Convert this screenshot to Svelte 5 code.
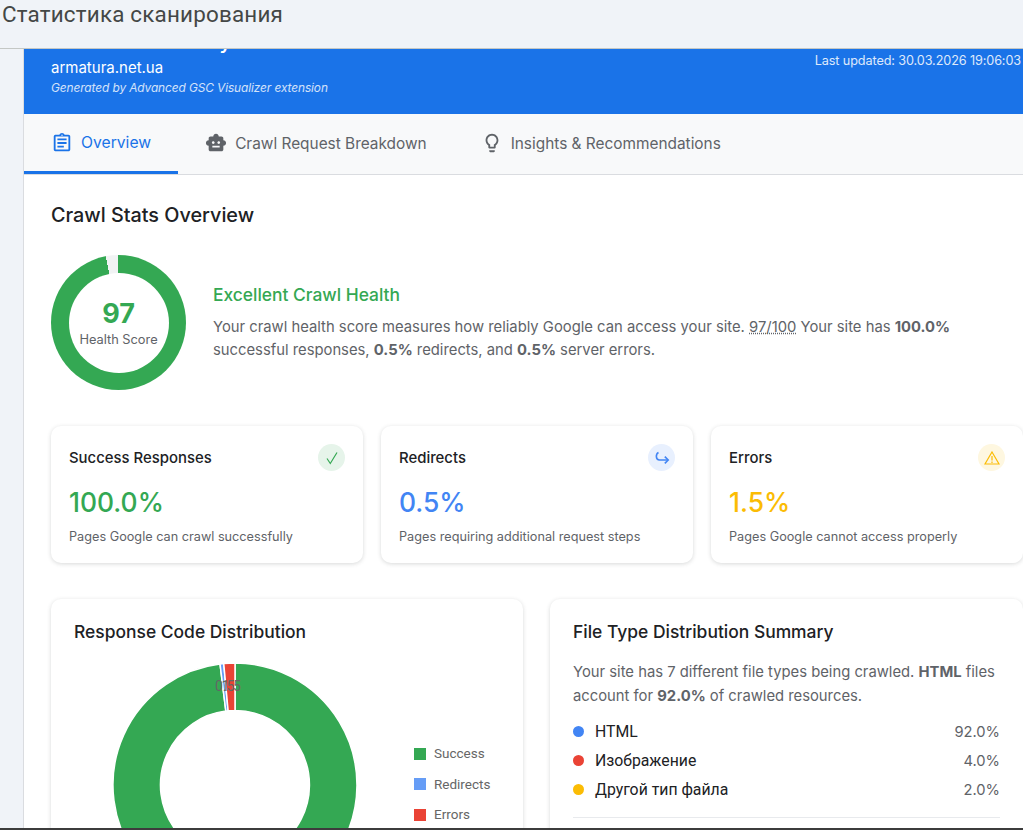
<script>
  const tabs = [
    { label: 'Overview', active: true, d: ['M19 3h-4.18C14.4 1.84 13.3 1 12 1s-2.4.84-2.82 2H5c-.14 0-.27.01-.4.04-.39.08-.74.28-1.01.55-.18.18-.33.4-.43.64-.1.23-.16.49-.16.77v14c0 .27.06.54.16.78s.25.45.43.64c.27.27.62.47 1.01.55.13.02.26.03.4.03h14c1.1 0 2-.9 2-2V5c0-1.1-.9-2-2-2zm-7-.25c.41 0 .75.34.75.75s-.34.75-.75.75-.75-.34-.75-.75.34-.75.75-.75zM19 19H5V5h14v14z', 'M7 15h7v2H7zm0-4h10v2H7zm0-4h10v2H7z'] },
    { label: 'Crawl Request Breakdown', active: false, d: ['M20 9V7c0-1.1-.9-2-2-2h-3c0-1.66-1.34-3-3-3S9 3.34 9 5H6c-1.1 0-2 .9-2 2v2c-1.66 0-3 1.34-3 3s1.34 3 3 3v4c0 1.1.9 2 2 2h12c1.1 0 2-.9 2-2v-4c1.66 0 3-1.34 3-3s-1.34-3-3-3zM7.5 11.5c0-.83.67-1.5 1.5-1.5s1.5.67 1.5 1.5S9.83 13 9 13s-1.5-.67-1.5-1.5zM16 17H8v-2h8v2zm-1-4c-.83 0-1.5-.67-1.5-1.5S14.17 10 15 10s1.5.67 1.5 1.5S15.83 13 15 13z'] },
    { label: 'Insights & Recommendations', active: false, d: ['M9 21c0 .55.45 1 1 1h4c.55 0 1-.45 1-1v-1H9v1zm3-19C8.14 2 5 5.14 5 9c0 2.38 1.19 4.47 3 5.74V17c0 .55.45 1 1 1h6c.55 0 1-.45 1-1v-2.26c1.81-1.27 3-3.36 3-5.74 0-3.86-3.14-7-7-7zm2.85 11.1l-.85.6V16h-4v-2.3l-.85-.6C7.8 12.16 7 10.63 7 9c0-2.76 2.24-5 5-5s5 2.24 5 5c0 1.63-.8 3.16-2.15 4.1z'] }
  ];
  const cards = [
    { title: 'Success Responses', value: '100.0%', note: 'Pages Google can crawl successfully', kind: 'ok' },
    { title: 'Redirects', value: '0.5%', note: 'Pages requiring additional request steps', kind: 'redir' },
    { title: 'Errors', value: '1.5%', note: 'Pages Google cannot access properly', kind: 'err' }
  ];
  const legend = [
    { label: 'Success', color: '#34a853' },
    { label: 'Redirects', color: '#669df6' },
    { label: 'Errors', color: '#ea4335' }
  ];
  const files = [
    { label: 'HTML', value: '92.0%', color: '#4285f4' },
    { label: 'Изображение', value: '4.0%', color: '#ea4335' },
    { label: 'Другой тип файла', value: '2.0%', color: '#fbbc04' }
  ];

  const cx = 122, cy = 122, R = 122, r = 74.5;
  const total = 102;
  const pt = (rad, deg) => {
    const a = (deg - 90) * Math.PI / 180;
    return `${(cx + rad * Math.cos(a)).toFixed(2)} ${(cy + rad * Math.sin(a)).toFixed(2)}`;
  };
  const slice = (from, to) => {
    const large = to - from > 180 ? 1 : 0;
    return `M${pt(R, from)} A${R} ${R} 0 ${large} 1 ${pt(R, to)} L${pt(r, to)} A${r} ${r} 0 ${large} 0 ${pt(r, from)} Z`;
  };
  const vals = [
    { v: 100, c: '#34a853' },
    { v: 0.5, c: '#669df6' },
    { v: 1.5, c: '#ea4335' }
  ];
  let acc = 0;
  const slices = vals.map((s) => {
    const from = acc;
    acc += (s.v / total) * 360;
    return { d: slice(from, acc), c: s.c };
  });
</script>

<div class="page">
  <header class="topbar">Статистика сканирования</header>
  <div class="body">
    <div class="rail"></div>
    <main class="main">
      <section class="hero">
        <div class="hero-left">
          <h1>Crawl Stats Analysis</h1>
          <div class="domain">armatura.net.ua</div>
          <div class="gen">Generated by Advanced GSC Visualizer extension</div>
        </div>
        <div class="updated">Last updated: 30.03.2026 19:06:03</div>
      </section>

      <nav class="tabs">
        {#each tabs as t}
          <div class="tab" class:active={t.active}>
            <svg class="tab-ic" viewBox="0 0 24 24" width="22" height="22" fill="currentColor">
              {#each t.d as p}<path d={p} />{/each}
            </svg>
            <span>{t.label}</span>
          </div>
        {/each}
      </nav>

      <div class="content">
        <h2 class="section-title">Crawl Stats Overview</h2>

        <div class="health">
          <div class="ring">
            <div class="ring-in">
              <div class="score">97</div>
              <div class="score-label">Health Score</div>
            </div>
          </div>
          <div class="health-text">
            <h3>Excellent Crawl Health</h3>
            <p>Your crawl health score measures how reliably Google can access your site. <span class="dotted">97/100</span> Your site has <b>100.0%</b> successful responses, <b>0.5%</b> redirects, and <b>0.5%</b> server errors.</p>
          </div>
        </div>

        <div class="cards">
          {#each cards as c}
            <div class="card stat {c.kind}">
              <div class="stat-head">
                <span class="stat-title">{c.title}</span>
                <span class="badge">
                  {#if c.kind === 'ok'}
                    <svg viewBox="0 0 14 14" width="14" height="14" fill="none" stroke="#34a853" stroke-width="1.2"><path d="M2 7.5 L5.3 12.5 L12 1.5" /></svg>
                  {:else if c.kind === 'redir'}
                    <svg viewBox="0 0 16 14" width="16" height="14" fill="none" stroke="#4285f4" stroke-width="1.6"><path d="M4.5 1.5 C1.5 3 1.5 9 5.5 9 L14 9" /><path d="M10.8 5.6 L14.2 9 L10.8 12.4" /></svg>
                  {:else}
                    <svg viewBox="0 0 16 14" width="16" height="14" fill="none" stroke="#fbbc04" stroke-width="1.2"><path d="M8 1 L15 13 L1 13 Z" /><path d="M8 5 V9.6 M8 10.6 V12" /></svg>
                  {/if}
                </span>
              </div>
              <div class="stat-value">{c.value}</div>
              <div class="stat-note">{c.note}</div>
            </div>
          {/each}
        </div>

        <div class="panels">
          <div class="card panel">
            <h3 class="panel-title">Response Code Distribution</h3>
            <div class="chart-row">
              <svg class="donut" width="244" height="244" viewBox="0 0 244 244">
                {#each slices as s}
                  <path d={s.d} fill={s.c} stroke="#fff" stroke-width="1.5" />
                {/each}
                <text x="102" y="28" class="dl">0.5</text>
                <text x="108.5" y="28" class="dl">1.5</text>
              </svg>
              <div class="legend">
                {#each legend as l}
                  <div class="legend-item">
                    <span class="swatch" style="background:{l.color}"></span>
                    <span>{l.label}</span>
                  </div>
                {/each}
              </div>
            </div>
          </div>

          <div class="card panel">
            <h3 class="panel-title">File Type Distribution Summary</h3>
            <p class="file-text">Your site has 7 different file types being crawled. <b>HTML</b> files account for <b>92.0%</b> of crawled resources.</p>
            <ul class="files">
              {#each files as f}
                <li>
                  <span class="dot" style="background:{f.color}"></span>
                  <span class="file-name">{f.label}</span>
                  <span class="file-val">{f.value}</span>
                </li>
              {/each}
            </ul>
            <hr />
          </div>
        </div>
      </div>
    </main>
  </div>
</div>

<style>
  :global(body) {
    margin: 0;
    background: #f0f3f8;
  }
  .page {
    width: 1023px;
    height: 830px;
    display: flex;
    flex-direction: column;
    overflow: hidden;
    box-sizing: border-box;
    border-bottom: 2px solid #3c3c3c;
    font-family: Inter, Roboto, sans-serif;
    color: #202124;
  }
  .topbar {
    height: 48px;
    flex: none;
    box-sizing: border-box;
    padding: 1px 0 0 2px;
    background: #f0f3f8;
    font-family: Roboto, sans-serif;
    font-size: 22.4px;
    line-height: 26px;
    color: #444746;
    letter-spacing: 0.2px;
  }
  .body {
    flex: 1;
    min-height: 0;
    display: flex;
    border-top: 1px solid #c4c7c5;
  }
  .rail {
    width: 23px;
    flex: none;
    background: #f0f3f8;
    border-right: 1px solid #dadce0;
  }
  .main {
    flex: 1;
    min-width: 0;
    background: #fff;
    overflow: hidden;
  }
  .hero {
    height: 65px;
    box-sizing: border-box;
    background: #1a73e8;
    color: #fff;
    display: flex;
    justify-content: space-between;
    padding-left: 27px;
    padding-right: 2px;
    overflow: hidden;
  }
  h1 {
    margin: -24px 0 0;
    font-size: 21.4px;
    line-height: 32px;
    font-weight: 500;
  }
  .domain {
    font-size: 15px;
    line-height: 20px;
    margin-top: 1px;
  }
  .gen {
    font-size: 11.9px;
    line-height: 16px;
    margin-top: 2px;
    font-style: italic;
    opacity: 0.8;
    letter-spacing: -0.1px;
  }
  .updated {
    font-size: 12.65px;
    line-height: 16px;
    margin-top: 4px;
    opacity: 0.85;
    letter-spacing: -0.1px;
  }
  .tabs {
    height: 61px;
    box-sizing: border-box;
    display: flex;
    background: #f8f9fa;
    border-bottom: 1px solid #dadce0;
  }
  .tab {
    display: flex;
    align-items: center;
    gap: 8px;
    padding: 0 27px 2px;
    height: 60px;
    box-sizing: border-box;
    font-size: 15.4px;
    color: #5f6368;
  }
  .tab.active {
    color: #1a73e8;
    border-bottom: 3px solid #1a73e8;
    padding-bottom: 0;
    font-size: 15.7px;
  }
  .tab-ic { flex: none; }
  .content {
    padding: 0 0 0 27px;
  }
  .section-title {
    margin: 26px 0 0;
    font-size: 19.8px;
    line-height: 28px;
    font-weight: 500;
  }
  .health {
    margin-top: 26px;
    display: flex;
    align-items: center;
    gap: 27px;
  }
  .ring {
    width: 135px;
    height: 135px;
    flex: none;
    border-radius: 50%;
    background: conic-gradient(#34a853 0 349.2deg, #f1f3f4 349.2deg 360deg);
    display: flex;
    align-items: center;
    justify-content: center;
  }
  .ring-in {
    width: 100px;
    height: 100px;
    border-radius: 50%;
    background: #fff;
    display: flex;
    flex-direction: column;
    align-items: center;
    justify-content: center;
  }
  .score {
    font-size: 27px;
    line-height: 30px;
    font-weight: 700;
    color: #34a853;
    margin-top: 2px;
  }
  .score-label {
    font-size: 12.8px;
    line-height: 18px;
    color: #5f6368;
    margin-top: 2px;
  }
  .health-text h3 {
    margin: 0;
    font-size: 17.4px;
    line-height: 24px;
    font-weight: 500;
    color: #34a853;
  }
  .health-text p {
    margin: 9px 0 0;
    font-size: 14.8px;
    line-height: 23px;
    color: #5f6368;
  }
  .dotted {
    text-decoration: underline dotted;
  }
  .cards {
    margin-top: 36px;
    display: grid;
    grid-template-columns: repeat(3, 1fr);
    gap: 18px;
  }
  .card {
    background: #fff;
    border-radius: 10px;
    box-shadow: 0 1px 4px rgba(60, 64, 67, 0.2);
    box-sizing: border-box;
  }
  .stat {
    height: 137px;
    padding: 18px;
  }
  .stat-head {
    display: flex;
    justify-content: space-between;
    align-items: center;
  }
  .stat-title {
    font-size: 14.9px;
    font-weight: 500;
    color: #202124;
  }
  .badge {
    width: 27px;
    height: 27px;
    border-radius: 50%;
    display: flex;
    align-items: center;
    justify-content: center;
  }
  .ok .badge { background: #e6f4ea; }
  .redir .badge { background: #e8f0fe; }
  .err .badge { background: #fef7e0; }
  .stat-value {
    margin-top: 15px;
    font-size: 26.4px;
    line-height: 32px;
    font-weight: 500;
  }
  .ok .stat-value { color: #34a853; }
  .redir .stat-value { color: #4285f4; }
  .err .stat-value { color: #fbbc04; }
  .stat-note {
    margin-top: 10px;
    font-size: 12.7px;
    line-height: 18px;
    color: #5f6368;
  }
  .panels {
    margin-top: 36px;
    display: grid;
    grid-template-columns: 472px 1fr;
    gap: 27px;
  }
  .panel {
    padding: 21px 23px 23px;
    height: 300px;
  }
  .panel-title {
    margin: 0;
    font-size: 17.45px;
    line-height: 24px;
    font-weight: 500;
  }
  .chart-row {
    margin-top: 19px;
    margin-left: 39px;
    display: flex;
    align-items: flex-start;
    gap: 57px;
  }
  .donut { flex: none; display: block; }
  .dl {
    font-family: Roboto, sans-serif;
    font-size: 14px;
    fill: #666;
  }
  .legend {
    margin-top: 83px;
    display: flex;
    flex-direction: column;
    gap: 15.5px;
    font-family: Roboto, sans-serif;
    font-size: 13.5px;
    line-height: 15px;
    color: #666;
  }
  .legend-item {
    display: flex;
    align-items: center;
    gap: 8px;
  }
  .swatch {
    width: 12px;
    height: 12px;
    flex: none;
  }
  .file-text {
    margin: 16px 0 0;
    font-size: 14.8px;
    line-height: 24px;
    color: #5f6368;
  }
  .files {
    list-style: none;
    margin: 9px 0 0;
    padding: 0;
  }
  .files li {
    display: flex;
    align-items: center;
    height: 29px;
  }
  .dot {
    width: 11px;
    height: 11px;
    border-radius: 50%;
    flex: none;
    margin-right: 11px;
  }
  .file-name {
    flex: 1;
    color: #202124;
    font-family: Roboto, sans-serif;
    font-size: 15.8px;
  }
  .file-val {
    color: #5f6368;
    font-size: 14.7px;
  }
  hr {
    border: 0;
    border-top: 1px solid #e8eaed;
    margin: 13px 0 0;
  }
</style>
